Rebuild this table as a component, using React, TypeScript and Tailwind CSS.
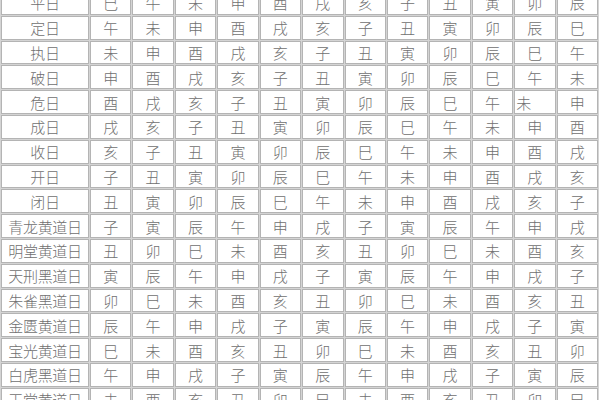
import React from "react";

const rows: [string, string[]][] = [
  ["平日", "巳午未申酉戌亥子丑寅卯辰".split("")],
  ["定日", "午未申酉戌亥子丑寅卯辰巳".split("")],
  ["执日", "未申酉戌亥子丑寅卯辰巳午".split("")],
  ["破日", "申酉戌亥子丑寅卯辰巳午未".split("")],
  ["危日", "酉戌亥子丑寅卯辰巳午未申".split("")],
  ["成日", "戌亥子丑寅卯辰巳午未申酉".split("")],
  ["收日", "亥子丑寅卯辰巳午未申酉戌".split("")],
  ["开日", "子丑寅卯辰巳午未申酉戌亥".split("")],
  ["闭日", "丑寅卯辰巳午未申酉戌亥子".split("")],
  ["青龙黄道日", "子寅辰午申戌子寅辰午申戌".split("")],
  ["明堂黄道日", "丑卯巳未酉亥丑卯巳未酉亥".split("")],
  ["天刑黑道日", "寅辰午申戌子寅辰午申戌子".split("")],
  ["朱雀黑道日", "卯巳未酉亥丑卯巳未酉亥丑".split("")],
  ["金匮黄道日", "辰午申戌子寅辰午申戌子寅".split("")],
  ["宝光黄道日", "巳未酉亥丑卯巳未酉亥丑卯".split("")],
  ["白虎黑道日", "午申戌子寅辰午申戌子寅辰".split("")],
  ["玉堂黄道日", "未酉亥丑卯巳未酉亥丑卯巳".split("")],
];

export default function App() {
  return (
    <div className="w-[600px] h-[400px] overflow-hidden bg-white">
      <div
        className="-mt-[10px] w-[599px] grid grid-cols-[88px_repeat(12,1fr)] auto-rows-[23.8px] gap-[1px] p-[1px] bg-[#d4d4d4] text-[15px] font-light text-[#707070]"
        style={{ fontFamily: '"Noto Sans CJK SC", "Noto Sans", sans-serif' }}
      >
        {rows.map(([label, cells], ri) => (
          <React.Fragment key={ri}>
            <div className="bg-white border border-[#b4b4b4] flex items-center justify-center leading-none tracking-[-0.3px]">
              {label}
            </div>
            {cells.map((c, ci) => (
              <div
                key={ci}
                className={
                  ri === 4 && ci === 10
                    ? "bg-white border border-[#b4b4b4] flex items-center justify-start pl-[1px] leading-none"
                    : "bg-white border border-[#b4b4b4] flex items-center justify-center leading-none"
                }
              >
                {c}
              </div>
            ))}
          </React.Fragment>
        ))}
      </div>
    </div>
  );
}
